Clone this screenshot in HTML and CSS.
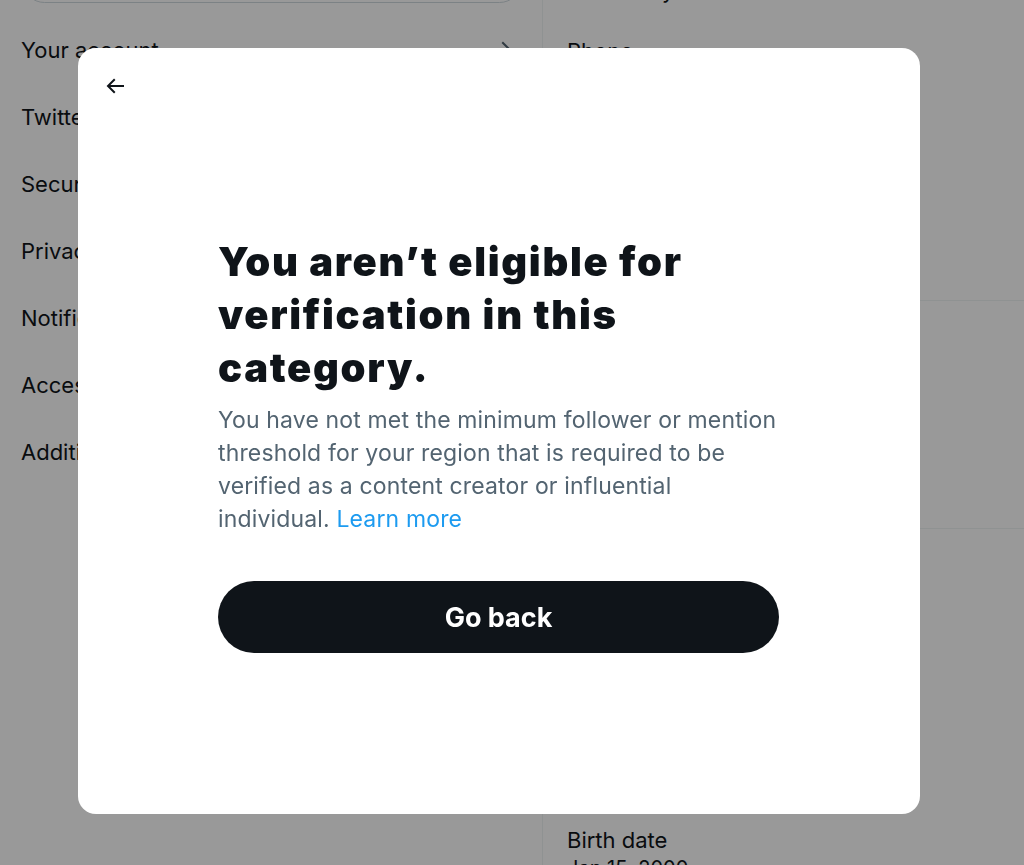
FILE: index.html
```html
<!DOCTYPE html>
<html lang="en">
<head>
<meta charset="utf-8">
<title>Settings</title>
<link rel="stylesheet" href="styles.css">
</head>
<body>
<div class="page">
  <aside class="menu">
    <div class="search"></div>
    <ul class="menu-list">
      <li class="menu-item"><span>Your account</span>
        <svg class="chev" viewBox="0 0 24 24"><path d="M14.586 12L7.543 4.96l1.414-1.42L17.414 12l-8.457 8.46-1.414-1.42L14.586 12z"/></svg></li>
      <li class="menu-item"><span>Twitter Blue</span></li>
      <li class="menu-item"><span>Security and account access</span></li>
      <li class="menu-item"><span>Privacy and safety</span></li>
      <li class="menu-item"><span>Notifications</span></li>
      <li class="menu-item"><span>Accessibility, display, and languages</span></li>
      <li class="menu-item"><span>Additional resources</span></li>
    </ul>
  </aside>
  <main class="detail">
    <div class="detail-top">Country</div>
    <section class="block block-a">
      <div class="label">Phone</div>
      <div class="value">+1 555 010 2030</div>
    </section>
    <section class="block block-b">
      <div class="label">Email</div>
      <div class="value">user@example.com</div>
    </section>
    <section class="block block-c">
      <div class="label">Country</div>
      <div class="value">United States</div>
      <div class="label gap">Languages</div>
      <div class="value">English</div>
      <div class="label gap">Gender</div>
      <div class="value">Male</div>
      <div class="label birth">Birth date</div>
      <div class="value dark">Jan 15, 2000</div>
    </section>
  </main>
</div>

<div class="overlay"></div>

<div class="modal" role="dialog">
  <div class="modal-head">
    <button class="back" aria-label="Back">
      <svg viewBox="0 0 24 24"><path d="M7.414 13l5.043 5.04-1.414 1.42L3.586 12l7.457-7.46 1.414 1.42L7.414 11H21v2H7.414z"/></svg>
    </button>
  </div>
  <div class="modal-body">
    <h1 class="title">You aren’t eligible for verification in this category.</h1>
    <p class="desc">You have not met the minimum follower or mention threshold for your region that is required to be verified as a content creator or influential individual. <a class="link" href="#">Learn more</a></p>
    <button class="primary">Go back</button>
  </div>
</div>
</body>
</html>
```
FILE: styles.css
```css
* { box-sizing: border-box; }
html, body { margin: 0; padding: 0; }
body {
  width: 1024px;
  height: 865px;
  overflow: hidden;
  background: #ffffff;
  font-family: "Inter", "Liberation Sans", sans-serif;
  color: #0f1419;
}

.page {
  display: flex;
  height: 865px;
}

.menu {
  width: 542px;
  flex: none;
  padding: 0 20px 0 0;
}
.search {
  margin: -42px 0 0 22px;
  height: 45px;
  border: 1px solid #cfd9de;
  border-radius: 24px;
}
.menu-list {
  list-style: none;
  margin: 13px 0 0 0;
  padding: 0;
}
.menu-item {
  height: 67px;
  display: flex;
  align-items: center;
  justify-content: space-between;
  padding: 0 4px 0 21px;
  font-size: 22px;
  color: #0f1419;
}
.chev {
  width: 24px;
  height: 24px;
  fill: #536471;
}

.detail {
  flex: 1;
  border-left: 1px solid #eff3f4;
  display: flex;
  flex-direction: column;
  overflow: hidden;
}
.detail-top {
  flex: none;
  margin-top: -20px;
  padding-left: 48px;
  font-size: 22px;
  height: 26px;
  line-height: 20px;
}
.block {
  flex: none;
  padding: 0 24px;
  border-bottom: 1px solid #eff3f4;
}
.block-a { height: 295px; padding-top: 30px; }
.block-b { height: 228px; padding-top: 30px; }
.block-c { padding-top: 16px; border-bottom: none; }
.label {
  font-size: 22px;
  line-height: 30px;
  color: #0f1419;
}
.value {
  font-size: 20px;
  line-height: 26px;
  color: #536471;
}
.value.dark { color: #0f1419; }
.gap { margin-top: 30px; }
.birth { margin-top: 52px; }

.overlay {
  position: fixed;
  inset: 0;
  background: rgba(0, 0, 0, 0.4);
}

.modal {
  position: absolute;
  left: 78px;
  top: 48px;
  width: 842px;
  height: 766px;
  background: #ffffff;
  border-radius: 18px;
  display: flex;
  flex-direction: column;
}
.modal-head {
  height: 76px;
  display: flex;
  align-items: center;
  padding: 0 0 0 23px;
}
.back {
  width: 28px;
  height: 28px;
  padding: 0;
  border: 0;
  background: none;
  display: flex;
  align-items: center;
  justify-content: center;
}
.back svg {
  width: 24px;
  height: 24px;
  fill: #0f1419;
}
.modal-body {
  padding: 111px 0 0 140px;
  width: 701px;
}
.title {
  margin: 0;
  max-width: 480px;
  font-size: 40px;
  line-height: 53px;
  font-weight: 900;
  letter-spacing: 1.7px;
  color: #0f1419;
}
.desc {
  margin: 10px 0 0 0;
  max-width: 560px;
  font-size: 23px;
  line-height: 33px;
  letter-spacing: 0.15px;
  color: #536471;
}
.link {
  color: #1d9bf0;
  text-decoration: none;
}
.primary {
  margin-top: 45px;
  width: 561px;
  height: 72px;
  border: 0;
  border-radius: 36px;
  background: #0f1419;
  color: #ffffff;
  font-family: "Inter", "Liberation Sans", sans-serif;
  font-size: 27px;
  font-weight: 700;
  letter-spacing: 0;
  cursor: pointer;
}
```
